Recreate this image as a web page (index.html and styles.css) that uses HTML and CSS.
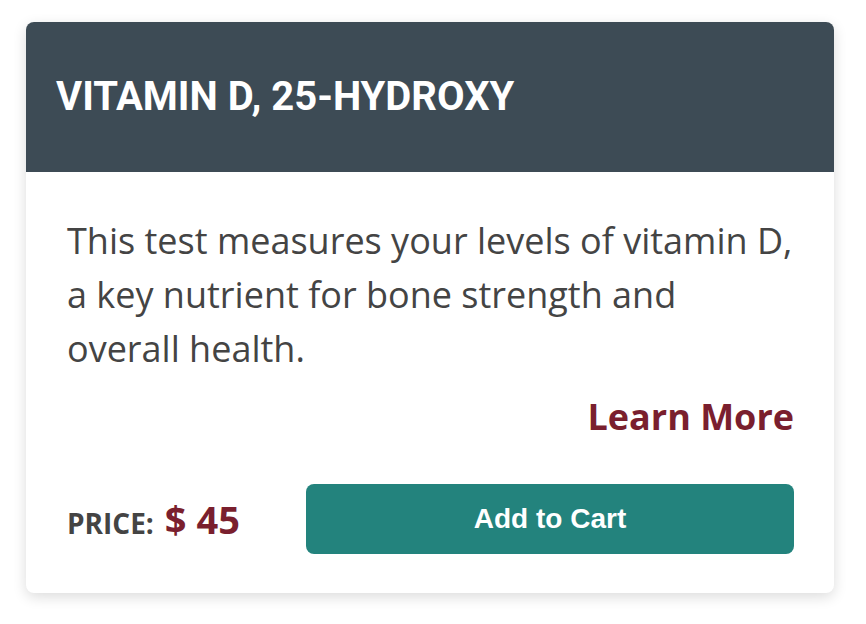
FILE: index.html
```html
<!DOCTYPE html>
<html lang="en">
<head>
  <meta charset="UTF-8" />
  <meta name="viewport" content="width=device-width, initial-scale=1.0" />
  <title>Vitamin D, 25-Hydroxy</title>
  <link rel="stylesheet" href="styles.css">
</head>
<body>
  <div class="test-card">
    <div class="test-card-header">
      <h2>Vitamin D, 25-Hydroxy</h2>
    </div>
    <div class="test-card-body">
      <p class="test-desc">This test measures your levels of vitamin D, a key nutrient for bone strength and overall health.</p>
      <div class="learn-more-row">
        <a href="#" class="learn-more">Learn More</a>
      </div>
      <div class="price-row">
        <div class="price">
          <span class="price-label">Price:</span>
          <span class="price-value">$ 45</span>
        </div>
        <button type="button" class="add-to-cart">Add to Cart</button>
      </div>
    </div>
  </div>
</body>
</html>
```

FILE: styles.css
```css
body {
  margin: 0;
  padding: 22px 32px 31px 26px;
  background-color: #ffffff;
  font-family: 'Open Sans', sans-serif;
}
.test-card {
  background: #ffffff;
  border-radius: 8px;
  box-shadow: 0 4px 14px rgba(0, 0, 0, 0.14);
  overflow: hidden;
}
.test-card-header {
  background-color: #3d4b55;
  height: 150px;
  display: flex;
  align-items: center;
  padding: 0 30px;
}
.test-card-header h2 {
  margin: 0;
  font-family: Roboto, sans-serif;
  font-weight: 700;
  font-size: 40px;
  color: #ffffff;
  text-transform: uppercase;
  line-height: 1;
}
.test-card-body {
  padding: 42px 40px 39px 41px;
}
.test-desc {
  margin: 0;
  font-size: 36px;
  line-height: 54px;
  color: #444444;
}
.learn-more-row {
  display: flex;
  justify-content: flex-end;
  margin-top: 14px;
}
.learn-more {
  font-size: 36px;
  font-weight: 700;
  line-height: 54px;
  color: #7a1f2e;
  text-decoration: none;
}
.price-row {
  display: flex;
  align-items: center;
  margin-top: 40px;
}
.price {
  width: 239px;
  display: flex;
  align-items: baseline;
  gap: 11px;
}
.price-label {
  font-size: 28px;
  font-weight: 700;
  color: #444444;
  text-transform: uppercase;
}
.price-value {
  font-size: 38px;
  font-weight: 700;
  color: #7a1f2e;
}
.add-to-cart {
  flex: 1;
  height: 70px;
  border: none;
  border-radius: 8px;
  background-color: #23837d;
  color: #ffffff;
  font-family: 'Liberation Sans', Arial, sans-serif;
  font-weight: 700;
  font-size: 28px;
  cursor: pointer;
}
```
